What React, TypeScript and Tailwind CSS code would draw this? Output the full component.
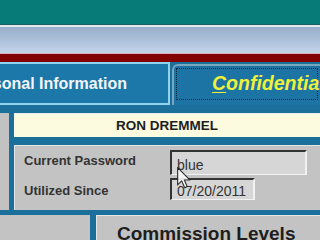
import React from "react";

// Old desktop-style profile form, cropped: header bands, two tabs, password panel.
const FONT = { fontFamily: '"Liberation Sans", Arial, sans-serif' };

function Cursor() {
  return (
    <svg
      className="absolute left-[177px] top-[167px] opacity-90"
      width="14"
      height="22"
      viewBox="0 0 12 19"
    >
      <path
        d="M0.5 0.5 L0.5 15.5 L4 12 L6.6 18 L8.8 17 L6.3 11.2 L11 11.2 Z"
        fill="#fafafa"
        stroke="#222"
        strokeWidth="1"
        strokeLinejoin="round"
      />
    </svg>
  );
}

export default function App() {
  return (
    <div
      className="relative w-[320px] h-[240px] overflow-hidden flex flex-col bg-[#1b6f9b]"
      style={FONT}
    >
      {/* title bands */}
      <div className="h-[24px] shrink-0 bg-[#077b77]" />
      <div className="h-px shrink-0 bg-[#1d5d5b]" />
      <div className="h-[2px] shrink-0 bg-[#dfe9f0]" />
      <div className="h-[26px] shrink-0 bg-gradient-to-b from-[#97adca] to-[#c4d4ea]" />
      <div className="h-px shrink-0 bg-[#d9aeb6]" />
      <div className="h-[8px] shrink-0 bg-[#820000]" />

      {/* tabs */}
      <div className="h-[43px] shrink-0 flex">
        <div className="w-[170px] shrink-0 flex items-center overflow-hidden bg-[#1c78a8] border-2 border-l-0 border-[#8fd3ec]">
          <span className="ml-[-33px] whitespace-nowrap text-[16px] font-bold text-[#f2f6fa]">
            Personal Information
          </span>
        </div>
        <div className="ml-[2px] mt-[2px] flex-1 rounded-tl-[6px] border-2 border-r-0 border-b-0 border-[#7aa6bd] bg-[#1b74a3] p-[2px] pb-[5px] overflow-hidden">
          <div className="h-full flex items-center pl-[35px] border border-dotted border-[#0b2433]">
            <span className="whitespace-nowrap text-[19.5px] font-bold italic text-[#f0f03a]">
              <span className="underline underline-offset-2">C</span>onfidential
            </span>
          </div>
        </div>
      </div>

      <div className="h-[8px] shrink-0" />

      {/* name + password panel */}
      <div className="h-[97px] shrink-0 flex">
        <div className="w-[9px] shrink-0 bg-[#c2c2c2]" />
        <div className="w-[5px] shrink-0" />
        <div className="flex-1 flex flex-col">
          <div className="h-[24px] shrink-0 flex items-center justify-center bg-[#fcfadf] border-t border-[#e8eef0]">
            <span className="text-[13.5px] font-bold text-[#1e1e1e] pt-[2px]">RON DREMMEL</span>
          </div>
          <div className="h-[8px] shrink-0" />
          <div className="flex-1 flex flex-col gap-[3px] pt-[4px] pl-[9px] bg-[#c3c3c3] border-t border-l border-[#e6e6e6]">
            <div className="flex items-start">
              <span className="w-[146px] mt-[1px] text-[13px] font-bold text-[#333]">Current Password</span>
              <div className="w-[137px] h-[25px] pt-[3px] pl-[5px] bg-[#d6d6d6] border-t-2 border-l-2 border-b border-r-2 border-t-[#333] border-l-[#333] border-b-[#f2f2f2] border-r-[#f2f2f2] text-[14px] text-[#333]">
                blue
              </div>
            </div>
            <div className="flex items-start">
              <span className="w-[146px] mt-[3px] text-[13px] font-bold text-[#333]">Utilized Since</span>
              <div className="w-[85px] h-[22px] pt-[1px] pl-[5px] bg-[#d6d6d6] border-t-2 border-l-2 border-b border-r-2 border-t-[#333] border-l-[#333] border-b-[#f2f2f2] border-r-[#f2f2f2] text-[14px] text-[#333]">
                07/20/2011
              </div>
            </div>
          </div>
        </div>
      </div>

      <div className="h-[5px] shrink-0" />

      {/* lower panels */}
      <div className="flex-1 flex">
        <div className="w-[90px] shrink-0 bg-[#c3c3c3] pt-[20px] pl-[2px] overflow-hidden">
          <span className="whitespace-nowrap text-[13px] font-bold text-[#333]">r Consultant</span>
        </div>
        <div className="w-[6px] shrink-0" />
        <div className="flex-1 bg-[#c3c3c3] border-t border-l border-[#e6e6e6] pl-[20px] pt-[4px]">
          <span className="whitespace-nowrap text-[19px] font-bold text-[#1e1e1e]">Commission Levels</span>
        </div>
      </div>

      <Cursor />
    </div>
  );
}
